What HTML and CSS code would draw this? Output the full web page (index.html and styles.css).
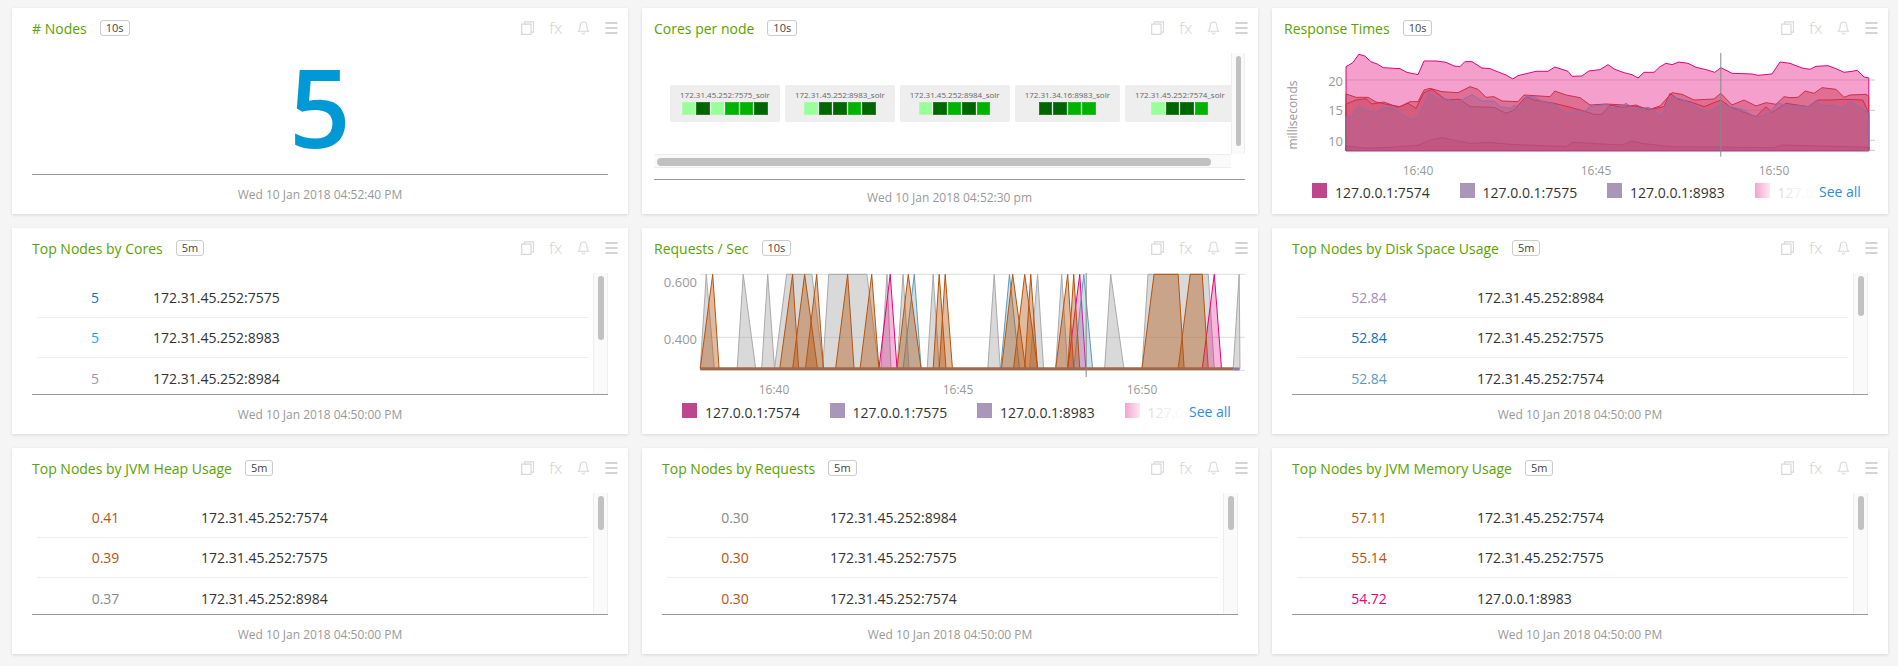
FILE: index.html
```html
<!DOCTYPE html>
<html lang="en">
<head>
  <meta charset="UTF-8" />
  <title>Solr Dashboard</title>
  <link rel="stylesheet" href="styles.css">
</head>
<body>
  <svg class="defs" width="0" height="0">
    <symbol id="i-copy" viewBox="0 0 13 14">
      <path d="M3.500 3V.8h9v10.400h-2.500M.7 3.200h9.300v10.200H.7z" fill="none" stroke="#d9d9d9" stroke-width="1.200"/>
    </symbol>
    <symbol id="i-bell" viewBox="0 0 13 14">
      <path d="M6.500 1C4.200 1 3.200 2.800 3.200 5c0 2.600-.6 4-1.700 5.200h10C10.400 9 9.800 7.600 9.800 5 9.800 2.800 8.800 1 6.500 1zM5 11.500c.2 1 .8 1.500 1.500 1.500S7.800 12.500 8 11.500" fill="none" stroke="#d9d9d9" stroke-width="1.100"/>
    </symbol>
    <symbol id="i-menu" viewBox="0 0 13 14">
      <path d="M.5 1h12v2H.5zM.5 6h12v2H.5zM.5 11h12v2H.5z" fill="#d4d4d4"/>
    </symbol>
  </svg>

  <div class="grid">

    <!-- row 1 -->
    <div class="card">
      <div class="card-head">
        <span class="title"># Nodes</span><span class="badge">10s</span>
        <div class="tools"><svg><use href="#i-copy"/></svg><span class="fx">fx</span><svg><use href="#i-bell"/></svg><svg><use href="#i-menu"/></svg></div>
      </div>
      <div class="card-body big-number">5</div>
      <div class="card-foot">Wed 10 Jan 2018 04:52:40 PM</div>
    </div>

    <div class="card wide">
      <div class="card-head">
        <span class="title">Cores per node</span><span class="badge">10s</span>
        <div class="tools"><svg><use href="#i-copy"/></svg><span class="fx">fx</span><svg><use href="#i-bell"/></svg><svg><use href="#i-menu"/></svg></div>
      </div>
      <div class="card-body heat">
        <div class="heat-view">
          <div class="tile"><div class="tile-name">172.31.45.252:7575_solr</div><div class="cells"><i class="c1"></i><i class="c3"></i><i class="c1"></i><i class="c2"></i><i class="c2"></i><i class="c3"></i></div></div>
          <div class="tile"><div class="tile-name">172.31.45.252:8983_solr</div><div class="cells"><i class="c1"></i><i class="c3"></i><i class="c3"></i><i class="c2"></i><i class="c3"></i></div></div>
          <div class="tile"><div class="tile-name">172.31.45.252:8984_solr</div><div class="cells"><i class="c1"></i><i class="c3"></i><i class="c2"></i><i class="c3"></i><i class="c2"></i></div></div>
          <div class="tile"><div class="tile-name">172.31.34.16:8983_solr</div><div class="cells"><i class="c3"></i><i class="c3"></i><i class="c2"></i><i class="c2"></i></div></div>
          <div class="tile"><div class="tile-name">172.31.45.252:7574_solr</div><div class="cells"><i class="c1"></i><i class="c3"></i><i class="c3"></i><i class="c2"></i></div></div>
        </div>
        <div class="vbar heat-vbar"><div class="thumb thumb-long"></div></div>
        <div class="hbar"><div class="hthumb"></div></div>
      </div>
      <div class="card-foot heat-foot">Wed 10 Jan 2018 04:52:30 pm</div>
    </div>

    <div class="card wide">
      <div class="card-head">
        <span class="title">Response Times</span><span class="badge">10s</span>
        <div class="tools"><svg><use href="#i-copy"/></svg><span class="fx">fx</span><svg><use href="#i-bell"/></svg><svg><use href="#i-menu"/></svg></div>
      </div>
      <svg class="chart" width="591" height="130">
        <g transform="translate(-14 -53) scale(.4 .3333)">
          <polygon fill="#f5a0cc" stroke="#e6007e" stroke-width="1" points="190,200 207,188 222,163 237,168 252,185 268,192 283,203 325,206 342,217 370,224 385,183 415,183 440,187 460,198 475,200 487,185 505,185 530,204 550,206 575,218 590,225 607,237 620,227 665,214 695,214 712,201 745,214 755,229 780,228 797,213 825,209 845,194 862,208 885,218 905,224 920,234 935,217 960,217 975,200 990,190 1005,194 1022,186 1045,190 1065,202 1090,209 1112,217 1127,203 1155,220 1205,222 1220,226 1255,222 1275,186 1300,190 1330,204 1350,208 1365,199 1395,197 1415,206 1435,217 1455,214 1468,211 1485,231 1497,234 1497,452 190,452"/>
          <polygon fill="rgba(205,60,90,.5)" stroke="#c9304f" stroke-width="1" points="190,282 215,292 245,292 265,306 300,315 325,320 350,305 370,305 385,270 400,265 430,275 470,278 500,260 520,268 540,292 560,290 580,303 620,305 635,285 700,290 712,273 740,285 775,293 800,315 840,312 885,315 920,320 950,328 975,318 1005,278 1030,283 1060,300 1110,297 1127,280 1155,315 1185,300 1215,318 1240,308 1265,313 1285,290 1300,293 1320,292 1338,273 1360,280 1380,263 1415,268 1435,292 1450,285 1490,283 1497,290 1497,452 190,452"/>
          <polygon fill="rgba(200,50,75,.3)" stroke="#c9304f" stroke-width="1" points="190,312 215,300 240,296 255,312 285,306 320,322 345,310 365,325 385,278 405,268 440,300 475,298 500,320 560,322 590,340 610,330 640,290 660,300 710,310 745,320 790,335 810,343 830,343 850,315 885,322 915,315 945,330 985,320 1000,280 1020,298 1050,305 1085,320 1127,300 1150,320 1180,335 1215,350 1240,320 1255,338 1290,310 1345,320 1370,300 1400,300 1435,298 1482,300 1497,340 1497,452 190,452"/>
          <polygon fill="rgba(165,100,150,.4)" stroke="#8a6fb0" stroke-width="1" points="190,352 205,350 222,317 240,330 265,338 285,323 305,323 340,350 355,360 370,350 398,280 420,297 445,297 465,310 480,300 505,284 530,303 560,303 575,320 600,325 612,316 625,330 640,290 660,290 680,305 710,312 740,342 760,335 785,337 800,320 840,314 855,325 875,322 890,310 915,330 945,322 960,330 975,350 1005,290 1030,298 1050,310 1070,325 1095,337 1130,313 1150,320 1180,328 1215,352 1245,342 1270,310 1300,318 1320,317 1345,320 1365,302 1380,318 1410,315 1430,325 1450,305 1470,318 1497,340 1497,452 190,452"/>
          <polygon fill="rgba(190,60,110,.25)" stroke="rgba(176,58,112,.5)" stroke-width="1" points="190,438 240,444 300,442 370,436 400,420 430,413 500,430 550,427 600,433 740,440 755,427 880,435 905,423 930,430 1000,440 1260,443 1280,435 1497,442 1497,452 190,452"/>
          <line class="grid-line" x1="190" y1="240" x2="1513" y2="240"/>
          <line class="grid-line" x1="190" y1="331" x2="1513" y2="331"/>
          <line class="grid-line" x1="190" y1="421" x2="1513" y2="421"/>
          <line class="grid-line" x1="1480" y1="451" x2="1513" y2="451"/>
          <line class="cursor" x1="1127" y1="158" x2="1127" y2="470"/>
        </g>
        <text class="axis" transform="rotate(-90 13 62)" x="13" y="62" text-anchor="middle">milliseconds</text>
        <text class="axis num" x="59" y="33" text-anchor="end">20</text>
        <text class="axis num" x="59" y="62" text-anchor="end">15</text>
        <text class="axis num" x="59" y="93" text-anchor="end">10</text>
        <text class="axis" x="134" y="122" text-anchor="middle">16:40</text>
        <text class="axis" x="312" y="122" text-anchor="middle">16:45</text>
        <text class="axis" x="490" y="122" text-anchor="middle">16:50</text>
      </svg>
      <div class="legend">
        <span class="leg"><i class="sw s1"></i>127.0.0.1:7574</span>
        <span class="leg"><i class="sw s2"></i>127.0.0.1:7575</span>
        <span class="leg"><i class="sw s2"></i>127.0.0.1:8983</span>
        <span class="leg"><i class="sw s4"></i>127.0.0.1:8984</span>
        <a class="see-all">See all</a>
      </div>
    </div>

    <!-- row 2 -->
    <div class="card">
      <div class="card-head">
        <span class="title">Top Nodes by Cores</span><span class="badge">5m</span>
        <div class="tools"><svg><use href="#i-copy"/></svg><span class="fx">fx</span><svg><use href="#i-bell"/></svg><svg><use href="#i-menu"/></svg></div>
      </div>
      <div class="card-body list-wrap">
        <div class="list cols-a">
          <div class="row"><span class="val blue">5</span><span>172.31.45.252:7575</span></div>
          <div class="row"><span class="val sky">5</span><span>172.31.45.252:8983</span></div>
          <div class="row"><span class="val purple">5</span><span>172.31.45.252:8984</span></div>
        </div>
        <div class="vbar"><div class="thumb thumb-mid"></div></div>
      </div>
      <div class="card-foot">Wed 10 Jan 2018 04:50:00 PM</div>
    </div>

    <div class="card wide">
      <div class="card-head">
        <span class="title">Requests / Sec</span><span class="badge">10s</span>
        <div class="tools"><svg><use href="#i-copy"/></svg><span class="fx">fx</span><svg><use href="#i-bell"/></svg><svg><use href="#i-menu"/></svg></div>
      </div>
      <svg class="chart" width="591" height="130">
        <g transform="translate(-14 -51) scale(.4016 .3333)">
          <line class="grid-line light" x1="150" y1="157" x2="1507" y2="157"/>
          <line class="grid-line light" x1="150" y1="346" x2="1507" y2="346"/>
          <line class="grid-line light" x1="150" y1="445" x2="1507" y2="445"/>
          <g class="peaks gray">
            <polygon points="150,440 165,157 185,440"/>
            <polygon points="242,440 257,157 288,440"/>
            <polygon points="303,440 318,157 335,440"/>
            <polygon points="335,440 365,157 428,157 457,440"/>
            <polygon points="455,440 470,157 565,157 595,440"/>
            <polygon points="600,440 615,157 625,440"/>
            <polygon points="640,440 655,157 670,440"/>
            <polygon points="715,440 730,157 745,440"/>
            <polygon points="866,440 882,157 897,440"/>
            <polygon points="970,440 990,157 1005,440"/>
            <polygon points="1035,440 1050,157 1065,440"/>
            <polygon points="1157,440 1172,157 1205,440"/>
            <polygon points="1250,440 1265,157 1415,157 1430,440"/>
            <polygon points="1477,440 1492,157 1494,440"/>
          </g>
          <g class="peaks pink">
            <polygon points="595,440 623,157 640,440"/>
            <polygon points="1065,440 1095,157 1110,440"/>
            <polygon points="1400,440 1430,157 1448,440"/>
          </g>
          <g class="peaks blue">
            <polygon points="655,440 683,157 700,440"/>
            <polygon points="898,440 920,157 945,440"/>
            <polygon points="1080,440 1105,157 1127,440"/>
          </g>
          <g class="peaks orange">
            <polygon points="150,440 181,157 197,440"/>
            <polygon points="348,440 380,157 395,440"/>
            <polygon points="380,440 410,157 442,440"/>
            <polygon points="412,440 440,157 457,440"/>
            <polygon points="487,440 517,157 533,440"/>
            <polygon points="548,440 577,157 595,440"/>
            <polygon points="640,440 668,157 700,440"/>
            <polygon points="730,440 745,157 762,440"/>
            <polygon points="745,440 760,157 778,440"/>
            <polygon points="900,440 928,157 960,440"/>
            <polygon points="930,440 958,157 990,440"/>
            <polygon points="958,440 973,157 990,440"/>
            <polygon points="1035,440 1065,157 1080,440"/>
            <polygon points="1065,440 1080,157 1095,440"/>
            <polygon points="1250,440 1280,157 1340,157 1355,440"/>
            <polygon points="1340,440 1370,157 1400,157 1415,440"/>
          </g>
          <line class="base-line" x1="150" y1="440" x2="1478" y2="440"/>
          <line class="base-line end" x1="1478" y1="441" x2="1493" y2="441"/>
          <line class="cursor" x1="1111" y1="152" x2="1111" y2="465"/>
        </g>
        <text class="axis num" x="43" y="14" text-anchor="end">0.600</text>
        <text class="axis num" x="43" y="71" text-anchor="end">0.400</text>
        <text class="axis" x="120" y="121" text-anchor="middle">16:40</text>
        <text class="axis" x="304" y="121" text-anchor="middle">16:45</text>
        <text class="axis" x="488" y="121" text-anchor="middle">16:50</text>
      </svg>
      <div class="legend">
        <span class="leg"><i class="sw s1"></i>127.0.0.1:7574</span>
        <span class="leg"><i class="sw s2"></i>127.0.0.1:7575</span>
        <span class="leg"><i class="sw s2"></i>127.0.0.1:8983</span>
        <span class="leg"><i class="sw s4"></i>127.0.0.1:8984</span>
        <a class="see-all">See all</a>
      </div>
    </div>

    <div class="card">
      <div class="card-head">
        <span class="title">Top Nodes by Disk Space Usage</span><span class="badge">5m</span>
        <div class="tools"><svg><use href="#i-copy"/></svg><span class="fx">fx</span><svg><use href="#i-bell"/></svg><svg><use href="#i-menu"/></svg></div>
      </div>
      <div class="card-body list-wrap">
        <div class="list cols-d">
          <div class="row"><span class="val purple">52.84</span><span>172.31.45.252:8984</span></div>
          <div class="row"><span class="val blue">52.84</span><span>172.31.45.252:7575</span></div>
          <div class="row"><span class="val teal">52.84</span><span>172.31.45.252:7574</span></div>
        </div>
        <div class="vbar"><div class="thumb thumb-short"></div></div>
      </div>
      <div class="card-foot">Wed 10 Jan 2018 04:50:00 PM</div>
    </div>

    <!-- row 3 -->
    <div class="card">
      <div class="card-head">
        <span class="title">Top Nodes by JVM Heap Usage</span><span class="badge">5m</span>
        <div class="tools"><svg><use href="#i-copy"/></svg><span class="fx">fx</span><svg><use href="#i-bell"/></svg><svg><use href="#i-menu"/></svg></div>
      </div>
      <div class="card-body list-wrap">
        <div class="list cols-b">
          <div class="row"><span class="val rust">0.41</span><span>172.31.45.252:7574</span></div>
          <div class="row"><span class="val rust">0.39</span><span>172.31.45.252:7575</span></div>
          <div class="row"><span class="val grey">0.37</span><span>172.31.45.252:8984</span></div>
        </div>
        <div class="vbar"><div class="thumb thumb-tiny"></div></div>
      </div>
      <div class="card-foot">Wed 10 Jan 2018 04:50:00 PM</div>
    </div>

    <div class="card">
      <div class="card-head">
        <span class="title">Top Nodes by Requests</span><span class="badge">5m</span>
        <div class="tools"><svg><use href="#i-copy"/></svg><span class="fx">fx</span><svg><use href="#i-bell"/></svg><svg><use href="#i-menu"/></svg></div>
      </div>
      <div class="card-body list-wrap">
        <div class="list cols-c">
          <div class="row"><span class="val grey">0.30</span><span>172.31.45.252:8984</span></div>
          <div class="row"><span class="val rust">0.30</span><span>172.31.45.252:7575</span></div>
          <div class="row"><span class="val rust">0.30</span><span>172.31.45.252:7574</span></div>
        </div>
        <div class="vbar"><div class="thumb thumb-tiny"></div></div>
      </div>
      <div class="card-foot">Wed 10 Jan 2018 04:50:00 PM</div>
    </div>

    <div class="card">
      <div class="card-head">
        <span class="title">Top Nodes by JVM Memory Usage</span><span class="badge">5m</span>
        <div class="tools"><svg><use href="#i-copy"/></svg><span class="fx">fx</span><svg><use href="#i-bell"/></svg><svg><use href="#i-menu"/></svg></div>
      </div>
      <div class="card-body list-wrap">
        <div class="list cols-d">
          <div class="row"><span class="val rust">57.11</span><span>172.31.45.252:7574</span></div>
          <div class="row"><span class="val rust">55.14</span><span>172.31.45.252:7575</span></div>
          <div class="row"><span class="val magenta">54.72</span><span>127.0.0.1:8983</span></div>
        </div>
        <div class="vbar"><div class="thumb thumb-tiny"></div></div>
      </div>
      <div class="card-foot">Wed 10 Jan 2018 04:50:00 PM</div>
    </div>

  </div>
</body>
</html>
```

FILE: styles.css
```css
* {
  box-sizing: border-box;
}
body {
  margin: 0;
  font-family: "Open Sans", sans-serif;
  background: #f5f5f5;
  color: #333;
  height: 666px;
  overflow: hidden;
}

.defs {
  display: block;
}

.grid {
  display: grid;
  grid-template-columns: repeat(3, 616px);
  grid-auto-rows: 206px;
  column-gap: 14px;
  row-gap: 14px;
  padding: 8px 0 0 12px;
}

.card {
  background: #fff;
  box-shadow: 0 1px 3px rgba(0, 0, 0, 0.12);
  display: flex;
  flex-direction: column;
  padding: 0 20px;
  overflow: hidden;
}
.card.wide {
  padding: 0 13px 0 12px;
}

/* header */
.card-head {
  flex: none;
  height: 45px;
  padding-bottom: 5px;
  display: flex;
  align-items: center;
}
.title {
  font-size: 14px;
  color: #5aa300;
  white-space: nowrap;
}
.badge {
  margin-left: 13px;
  height: 16px;
  padding: 0 5px;
  border: 1px solid #ccc;
  border-radius: 3px;
  font-size: 11px;
  line-height: 14px;
  color: #444;
}
.tools {
  margin-left: auto;
  margin-right: -10px;
  display: flex;
  align-items: center;
  gap: 15px;
}
.card.wide .tools {
  margin-right: -3px;
}
.tools svg {
  width: 13px;
  height: 14px;
}
.fx {
  width: 13px;
  font-size: 17px;
  font-weight: 300;
  line-height: 14px;
  color: #d4d4d4;
  text-align: center;
}

.card-body {
  flex: none;
  height: 121px;
}
.card-foot {
  flex: 1;
  border-top: 1px solid #999;
  display: flex;
  align-items: center;
  justify-content: center;
  font-size: 12px;
  color: #999;
}

/* big number */
.big-number {
  font-size: 108px;
  font-weight: 600;
  line-height: 108px;
  color: #0099d6;
  text-align: center;
}

/* heat map */
.heat {
  height: 126px;
  display: grid;
  grid-template-columns: 1fr 14px;
  grid-template-rows: 101px 14px;
}
.heat-view {
  display: flex;
  align-items: center;
  gap: 5px;
  padding-left: 16px;
  overflow: hidden;
}
.tile {
  flex: none;
  height: 37px;
  padding: 4px 10px 0;
  background: #eee;
  border-radius: 2px;
}
.tile-name {
  font-size: 8px;
  line-height: 12px;
  color: #666;
  white-space: nowrap;
  text-align: center;
}
.cells {
  margin-top: 1px;
  display: flex;
  justify-content: center;
  gap: 1px;
}
.cells i {
  flex: none;
  width: 13.5px;
  height: 13px;
  border: 1px solid rgba(255, 255, 255, 0.15);
}
.c1 { background: #99ff99; }
.c2 { background: #00b300; }
.c3 { background: #006600; }
.hbar {
  border-top: 1px solid #eee;
  border-bottom: 1px solid #eee;
  background: #fafafa;
  padding: 3px 20px 0 3px;
}
.hthumb {
  height: 8px;
  border-radius: 4px;
  background: #c1c1c1;
}

/* scrollbars */
.vbar {
  flex: none;
  width: 15px;
  padding: 3px 3px 0 4px;
  background: #fafafa;
  border-left: 1px solid #eee;
  border-right: 1px solid #eee;
}
.heat-vbar {
  width: 14px;
}
.thumb {
  width: 100%;
  border-radius: 4px;
  background: #c1c1c1;
}
.thumb-long { height: 90px; }
.thumb-mid { height: 64px; }
.thumb-short { height: 40px; }
.thumb-tiny { height: 34px; }

/* top node lists */
.list-wrap {
  display: flex;
  padding-left: 5px;
  overflow: hidden;
}
.list {
  flex: 1;
  margin-right: 5px;
  padding-top: 5px;
}
.row {
  display: grid;
  height: 40px;
  align-items: center;
  font-size: 14px;
  color: #333;
  border-bottom: 1px solid #eee;
}
.row:last-child {
  border-bottom: none;
}
.cols-a .row { grid-template-columns: 116px 1fr; }
.cols-b .row { grid-template-columns: 137px 1fr; column-gap: 27px; }
.cols-c .row { grid-template-columns: 136px 1fr; column-gap: 27px; }
.cols-d .row { grid-template-columns: 144px 1fr; column-gap: 36px; }
.val { text-align: center; }
.blue { color: #0a6fc2; }
.sky { color: #00aeef; }
.purple { color: #a48fb5; }
.teal { color: #5d9cb8; }
.rust { color: #b5540f; }
.grey { color: #888; }
.magenta { color: #e6007e; }

/* charts */
.chart {
  display: block;
  flex: none;
}
.chart polygon,
.chart line {
  vector-effect: non-scaling-stroke;
}
.axis {
  font-family: "Open Sans", sans-serif;
  font-size: 12px;
  fill: #999;
}
.axis.num {
  font-size: 13px;
}
.grid-line {
  stroke: rgba(170, 110, 140, 0.4);
  stroke-width: 1;
}
.grid-line.light {
  stroke: #ddd;
}
.cursor {
  stroke: #888;
  stroke-width: 1;
}
.peaks polygon {
  stroke-width: 1;
}
.peaks.gray polygon {
  fill: rgba(170, 170, 170, 0.45);
  stroke: #aaa;
}
.peaks.pink polygon {
  fill: rgba(230, 0, 126, 0.28);
  stroke: #e6007e;
}
.peaks.blue polygon {
  fill: rgba(90, 150, 180, 0.3);
  stroke: #5d9cb8;
}
.peaks.orange polygon {
  fill: rgba(181, 84, 15, 0.4);
  stroke: #b5540f;
}
.base-line {
  stroke: #a0684a;
  stroke-width: 3;
}
.base-line.end {
  stroke: #8a7aa5;
}

.legend {
  position: relative;
  flex: none;
  height: 15px;
  margin-right: 14px;
  padding-left: 28px;
  display: flex;
  overflow: hidden;
  white-space: nowrap;
  font-size: 14px;
  line-height: 19px;
  color: #333;
}
.leg {
  display: flex;
  width: 147.5px;
  flex: none;
}
.sw {
  flex: none;
  width: 15px;
  height: 15px;
  margin-right: 8px;
}
.s1 { background: #bf468c; }
.s2 { background: #a996b8; }
.s4 { background: #f4a3cf; }
.see-all {
  position: absolute;
  right: 0;
  top: 0;
  height: 15px;
  width: 106px;
  padding-left: 64px;
  background: linear-gradient(90deg, rgba(255, 255, 255, 0) 0, rgba(255, 255, 255, 0.75) 15px, rgba(255, 255, 255, 0.92) 40px, #fff 62px);
  color: #2b8ce6;
  line-height: 17px;
}
```
